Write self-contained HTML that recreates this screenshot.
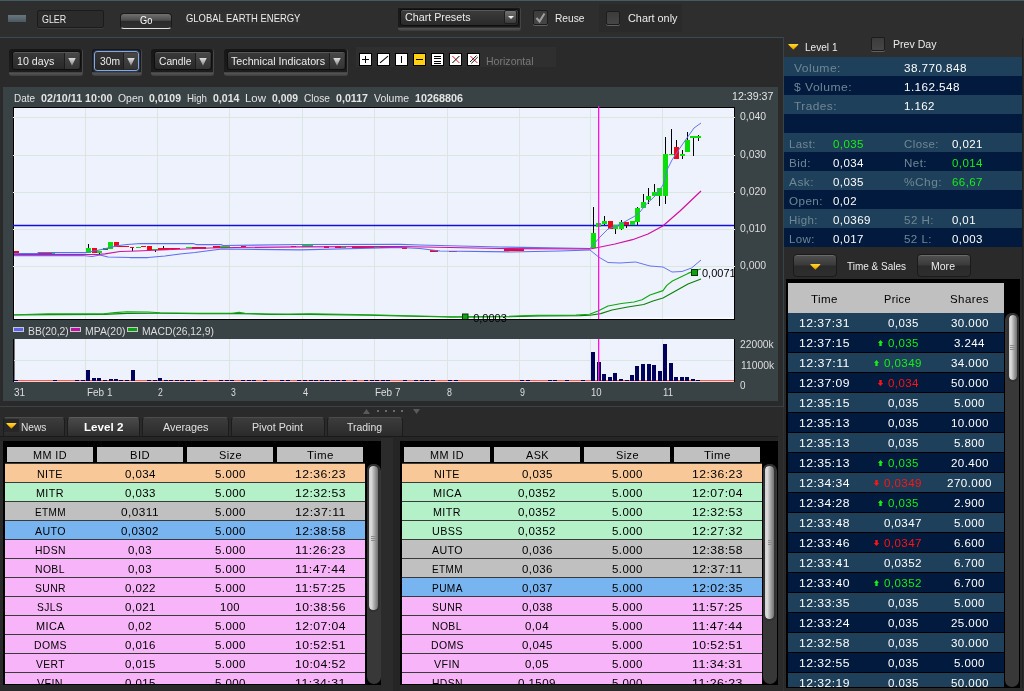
<!DOCTYPE html>
<html><head><meta charset="utf-8"><title>Chart</title>
<style>
*{box-sizing:border-box;margin:0;padding:0}
html,body{width:1024px;height:691px;overflow:hidden;background:#2a2a2a}
body{font-family:"Liberation Sans",sans-serif;font-size:11px;color:#e6e6e6;position:relative}
.abs{position:absolute}
.t{position:absolute;white-space:nowrap;line-height:1;transform-origin:0 0}
.ic{position:absolute;top:53px;width:13px;height:13px;background:#fff;border:1px solid #000}
.cb{position:absolute;background:linear-gradient(#3c3c3c,#464646);border:1px solid #1c1c1c;border-radius:2px;box-shadow:0 1px 0 #606060}
.tab{position:absolute;top:417px;height:19px;background:linear-gradient(#3c3c3c,#2b2b2b);border-left:1px solid #1c1c1c;border-right:1px solid #1c1c1c;border-top:1px solid #4c4c4c;border-radius:4px 4px 0 0}
.thumb{position:absolute;border-radius:6px;border:2px solid #323232;background:linear-gradient(90deg,#d0d0d0 0%,#dcdcdc 25%,#a0a0a0 65%,#707070 100%);background-clip:padding-box}
</style></head>
<body>
<div id="root" style="position:absolute;left:0;top:0;width:1024px;height:691px;will-change:transform">
<div class="abs" style="left:0px;top:0px;width:1024px;height:1px;background:#465a62"></div>
<div class="abs" style="left:0px;top:1px;width:1024px;height:36px;background:#2e2e2e"></div>
<div class="abs" style="left:0px;top:37px;width:783px;height:1px;background:#3a4a50"></div>
<div class="abs" style="left:8px;top:15px;width:18px;height:7px;background:linear-gradient(#6a767e,#4a5a62)"></div>
<div class="abs" style="left:37px;top:10px;width:67px;height:18px;background:#2b2b2b;border:1px solid #1b1b1b;border-radius:2px;box-shadow:0 1px 0 #3c3c3c"></div>
<div class="t" style="left:41.50px;top:14px;font-size:11px;color:#ececec;transform:scaleX(0.8073);">GLER</div>
<div class="abs" style="left:120px;top:13px;width:52px;height:16px;border-radius:4px;background:linear-gradient(#707070 0%,#4c4c4c 45%,#2a2a2a 52%,#303030 100%);border:1px solid #1a1a1a;border-bottom:1px solid #e0e0e0"></div>
<div class="t" style="left:139.70px;top:15px;font-size:11px;color:#fff;transform:scaleX(0.8376);">Go</div>
<div class="abs" style="left:186px;top:11px;width:115px;height:14px;background:#303030"></div>
<div class="t" style="left:186.00px;top:13px;font-size:11px;color:#ececec;transform:scaleX(0.8584);">GLOBAL EARTH ENERGY</div>
<div class="abs" style="left:398px;top:7px;width:123px;height:24px;background:linear-gradient(#3c3c3c 0%,#181818 6%,#1c1c1c 84%,#545454 88%,#3a3a3a 100%);border-radius:3px;border-right:1px solid #444"></div>
<div class="abs" style="left:400px;top:9px;width:119px;height:17px;background:linear-gradient(#3c3c3c,#2a2a2a);border:1px solid #0e0e0e;border-radius:3px;box-shadow:inset 0 1px 0 #585858"></div>
<div class="t" style="left:404.50px;top:12px;font-size:11px;color:#ececec;transform:scaleX(0.9738);">Chart Presets</div>
<div class="abs" style="left:504px;top:10px;width:13px;height:14px;background:linear-gradient(#727272,#3a3a3a);border:1px solid #1e1e1e;border-radius:2px"></div>
<div class="abs" style="left:507.5px;top:16px;width:0px;height:0px;border-left:3.2px solid transparent;border-right:3.2px solid transparent;border-top:3.6px solid #f0f0f0"></div>
<div class="cb" style="left:533px;top:10px;width:15px;height:15px;"></div>
<svg class="abs" style="left:533px;top:10px" width="15" height="15"><path d="M3.5 8 L6.5 11.5 L11.5 3.5" stroke="#a0a0a0" stroke-width="2" fill="none"/></svg>
<div class="t" style="left:554.50px;top:13px;font-size:11px;color:#ececec;transform:scaleX(0.9280);">Reuse</div>
<div class="abs" style="left:599px;top:4px;width:83px;height:28px;background:#2a2a2a"></div>
<div class="cb" style="left:606px;top:11px;width:14px;height:14px;"></div>
<div class="t" style="left:627.50px;top:13px;font-size:11px;color:#ececec;transform:scaleX(0.9868);">Chart only</div>
<div class="abs" style="left:9px;top:49px;width:74px;height:27px;background:linear-gradient(#161616 0%,#1d1d1d 85%,#585858 88%,#3e3e3e 100%);border-radius:3px;border-right:1px solid #484848"></div>
<div class="abs" style="left:12px;top:51px;width:69px;height:19px;background:linear-gradient(#3a3a3a,#292929);border:1px solid #0e0e0e;border-radius:3px;box-shadow:inset 0 1px 0 #585858"></div>
<div class="abs" style="left:64px;top:53px;width:15px;height:16px;background:linear-gradient(#484848,#343434);border-left:1px solid #1c1c1c;border-radius:0 2px 2px 0"></div>
<svg class="abs" style="left:68px;top:57.5px" width="8" height="8"><defs><linearGradient id="g9" x1="0" y1="0" x2="0" y2="1"><stop offset="0" stop-color="#e0e0e0"/><stop offset="1" stop-color="#808080"/></linearGradient></defs><path d="M0.3 0H7.7L4 7.8Z" fill="url(#g9)"/></svg>
<div class="t" style="left:17.00px;top:56px;font-size:11px;color:#ececec;transform:scaleX(0.9700);">10 days</div>
<div class="abs" style="left:92px;top:49px;width:50px;height:27px;background:linear-gradient(#161616 0%,#1d1d1d 85%,#585858 88%,#3e3e3e 100%);border-radius:3px;border-right:1px solid #484848"></div>
<div class="abs" style="left:94px;top:51px;width:45px;height:20px;background:linear-gradient(#343434,#272727);border:1px solid #86a8dc;border-radius:3px;box-shadow:0 0 0 1px #26364e"></div>
<div class="abs" style="left:123px;top:53px;width:15px;height:16px;background:linear-gradient(#484848,#343434);border-left:1px solid #1c1c1c;border-radius:0 2px 2px 0"></div>
<svg class="abs" style="left:127px;top:57.5px" width="8" height="8"><defs><linearGradient id="g92" x1="0" y1="0" x2="0" y2="1"><stop offset="0" stop-color="#e0e0e0"/><stop offset="1" stop-color="#808080"/></linearGradient></defs><path d="M0.3 0H7.7L4 7.8Z" fill="url(#g92)"/></svg>
<div class="t" style="left:99.50px;top:56px;font-size:11px;color:#ececec;transform:scaleX(0.9348);">30m</div>
<div class="abs" style="left:151px;top:49px;width:63px;height:27px;background:linear-gradient(#161616 0%,#1d1d1d 85%,#585858 88%,#3e3e3e 100%);border-radius:3px;border-right:1px solid #484848"></div>
<div class="abs" style="left:154px;top:51px;width:58px;height:19px;background:linear-gradient(#3a3a3a,#292929);border:1px solid #0e0e0e;border-radius:3px;box-shadow:inset 0 1px 0 #585858"></div>
<div class="abs" style="left:195px;top:53px;width:15px;height:16px;background:linear-gradient(#484848,#343434);border-left:1px solid #1c1c1c;border-radius:0 2px 2px 0"></div>
<svg class="abs" style="left:199px;top:57.5px" width="8" height="8"><defs><linearGradient id="g151" x1="0" y1="0" x2="0" y2="1"><stop offset="0" stop-color="#e0e0e0"/><stop offset="1" stop-color="#808080"/></linearGradient></defs><path d="M0.3 0H7.7L4 7.8Z" fill="url(#g151)"/></svg>
<div class="t" style="left:158.50px;top:56px;font-size:11px;color:#ececec;transform:scaleX(0.9320);">Candle</div>
<div class="abs" style="left:224px;top:49px;width:124px;height:27px;background:linear-gradient(#161616 0%,#1d1d1d 85%,#585858 88%,#3e3e3e 100%);border-radius:3px;border-right:1px solid #484848"></div>
<div class="abs" style="left:227px;top:51px;width:119px;height:19px;background:linear-gradient(#3a3a3a,#292929);border:1px solid #0e0e0e;border-radius:3px;box-shadow:inset 0 1px 0 #585858"></div>
<div class="abs" style="left:329px;top:53px;width:15px;height:16px;background:linear-gradient(#484848,#343434);border-left:1px solid #1c1c1c;border-radius:0 2px 2px 0"></div>
<svg class="abs" style="left:333px;top:57.5px" width="8" height="8"><defs><linearGradient id="g224" x1="0" y1="0" x2="0" y2="1"><stop offset="0" stop-color="#e0e0e0"/><stop offset="1" stop-color="#808080"/></linearGradient></defs><path d="M0.3 0H7.7L4 7.8Z" fill="url(#g224)"/></svg>
<div class="t" style="left:231.00px;top:56px;font-size:11px;color:#ececec;transform:scaleX(0.9733);">Technical Indicators</div>
<div class="abs" style="left:356px;top:47px;width:200px;height:20px;background:#2f2f2f"></div>
<div class="ic" style="left:359px;background:#fff"></div>
<div class="ic" style="left:377px;background:#fff"></div>
<div class="ic" style="left:395px;background:#fff"></div>
<div class="ic" style="left:413px;background:#ffd010"></div>
<div class="ic" style="left:431px;background:#fff"></div>
<div class="ic" style="left:449px;background:#fff"></div>
<div class="ic" style="left:467px;background:#fff"></div>
<svg class="abs" style="left:359px;top:53px" width="125" height="13"><path d="M3 6.5H10M6.5 3V10" stroke="#000" stroke-width="1" shape-rendering="crispEdges"/><path d="M21 9.8L29 3.2" stroke="#000" stroke-width="1.1"/><path d="M42.5 3V10" stroke="#000" stroke-width="1" shape-rendering="crispEdges"/><path d="M57 6.5H64" stroke="#000" stroke-width="1" shape-rendering="crispEdges"/><path d="M75 3.5H82M75 5.5H82M75 8.5H82M75 10.5H82" stroke="#000" stroke-width="1" shape-rendering="crispEdges"/><path d="M93.4 3L100.4 10" stroke="#f01010" stroke-width="1"/><path d="M93.4 10L100.4 3" stroke="#000" stroke-width="1"/><path d="M111.4 3L118.4 10" stroke="#f01010" stroke-width="1"/><path d="M111 9L117.5 2.6M112.3 10.4L118.8 4" stroke="#000" stroke-width="0.9"/></svg>
<div class="t" style="left:485.50px;top:56px;font-size:11px;color:#7a7a7a;transform:scaleX(0.9596);">Horizontal</div>
<div class="abs" style="left:3px;top:87px;width:775px;height:314px;background:#394245"></div>
<div class="t" style="left:13.50px;top:93px;font-size:11px;color:#e4e4e4;transform:scaleX(0.9048);">Date</div>
<div class="t" style="left:41.00px;top:93px;font-size:11px;color:#e4e4e4;transform:scaleX(0.9738);font-weight:bold;">02/10/11 10:00</div>
<div class="t" style="left:117.50px;top:93px;font-size:11px;color:#e4e4e4;transform:scaleX(0.9481);">Open</div>
<div class="t" style="left:149.00px;top:93px;font-size:11px;color:#e4e4e4;transform:scaleX(0.9507);font-weight:bold;">0,0109</div>
<div class="t" style="left:187.00px;top:93px;font-size:11px;color:#e4e4e4;transform:scaleX(0.8848);">High</div>
<div class="t" style="left:213.00px;top:93px;font-size:11px;color:#e4e4e4;transform:scaleX(0.9617);font-weight:bold;">0,014</div>
<div class="t" style="left:244.50px;top:93px;font-size:11px;color:#e4e4e4;transform:scaleX(1.0404);">Low</div>
<div class="t" style="left:272.00px;top:93px;font-size:11px;color:#e4e4e4;transform:scaleX(0.9436);font-weight:bold;">0,009</div>
<div class="t" style="left:304.00px;top:93px;font-size:11px;color:#e4e4e4;transform:scaleX(0.9251);">Close</div>
<div class="t" style="left:336.00px;top:93px;font-size:11px;color:#e4e4e4;transform:scaleX(0.9681);font-weight:bold;">0,0117</div>
<div class="t" style="left:374.00px;top:93px;font-size:11px;color:#e4e4e4;transform:scaleX(0.9541);">Volume</div>
<div class="t" style="left:414.50px;top:93px;font-size:11px;color:#e4e4e4;transform:scaleX(0.9806);font-weight:bold;">10268806</div>
<div class="t" style="left:732.30px;top:91px;font-size:11px;color:#e4e4e4;transform:scaleX(0.9674);">12:39:37</div>
<svg class="abs" style="left:0;top:87px" width="780" height="314" viewBox="0 87 780 314" font-family="Liberation Sans, sans-serif">
<rect x="13" y="107" width="722" height="213" fill="#000"/>
<rect x="14" y="108" width="720" height="211" fill="#eef2fc"/><rect x="14" y="317.5" width="720" height="1.5" fill="#fafbff"/><rect x="14" y="108" width="1" height="211" fill="#fafbff"/>
<rect x="13" y="339" width="722" height="43" fill="#eef2fc"/>
<rect x="13" y="339" width="1.5" height="43" fill="#000"/>
<rect x="734" y="339" width="1" height="43" fill="#000"/>
<path d="M85.5 108V319M85.5 339V381M157.5 108V319M157.5 339V381M229.5 108V319M229.5 339V381M302.5 108V319M302.5 339V381M374.5 108V319M374.5 339V381M447.5 108V319M447.5 339V381M519.5 108V319M519.5 339V381M590.5 108V319M590.5 339V381M662.5 108V319M662.5 339V381M14 117.5H734M14 155.5H734M14 192.5H734M14 229.5H734M14 266.5H734M14 360.5H734" stroke="#dbe6e1" stroke-width="1" fill="none" shape-rendering="crispEdges"/>
<path d="M13 117.5H14M734 117.5H735M13 155.5H14M734 155.5H735M13 192.5H14M734 192.5H735M13 229.5H14M734 229.5H735M13 266.5H14M734 266.5H735" stroke="#e8efec" stroke-width="1" shape-rendering="crispEdges"/>
<clipPath id="cp"><rect x="13" y="108" width="721" height="211"/></clipPath>
<g clip-path="url(#cp)">
<path d="M13 225.5H734" stroke="#1010e0" stroke-width="1.6"/>
<polyline points="14,315 48,314.6 104,314.4 127,313.4 160,313.2 200,313.8 240,313.6 270,314.4 310,314.4 370,315.2 400,316 450,317 510,316.8 540,315.9 580,315.6 590,315.2 600.7,313.6 612,310 627.8,307 643.7,304.5 653,301 663,298 675.5,291 688,284 701,279" fill="none" stroke="#0a800a" stroke-width="1.15" stroke-linejoin="round"/>
<polyline points="14,314.8 25,314.5 48,313.8 104,313.8 115,312.6 127,311.8 148,312 160,312.8 177,313 197,313.4 215,313.4 232,313.3 239,312.4 245,313.2 267,314 288,314.3 310,313.8 326,314 370,314.7 399,315.5 420,316 449,316.8 465,316.8 509,316.3 521,315.8 537,315.2 556,315.2 576,315 589.5,314.3 598,311 608,306 621.4,303.5 634,302 642,299.7 650,295 663,290.6 666.8,285.4 672.4,281 678.7,278 688,273.4 694,271 701,269" fill="none" stroke="#10a810" stroke-width="1.15" stroke-linejoin="round"/>
<g shape-rendering="crispEdges"><rect x="14" y="251" width="5" height="2" fill="#f00818"/><rect x="38" y="253" width="14" height="1" fill="#f00818"/><rect x="52" y="253" width="3" height="1" fill="#08e008"/><rect x="55" y="254" width="3" height="1" fill="#08e008"/><rect x="88" y="244" width="1" height="9" fill="#000"/><rect x="86" y="248" width="5" height="5" fill="#08e008"/><rect x="91.5" y="248" width="5" height="5" fill="#f00818"/><rect x="99" y="251" width="1" height="4" fill="#000"/><rect x="97" y="251" width="5" height="2" fill="#08e008"/><rect x="102.5" y="248" width="5" height="2" fill="#0a8a0a"/><rect x="108" y="242" width="5" height="6.5" fill="#08e008"/><rect x="113.5" y="242" width="5" height="5" fill="#f00818"/><rect x="119" y="246" width="10" height="1.2" fill="#f00818"/><rect x="131.5" y="246.5" width="1" height="4.5" fill="#000"/><rect x="130" y="246.5" width="4" height="1.5" fill="#f00818"/><rect x="136" y="246.5" width="5" height="1.2" fill="#08e008"/><rect x="141" y="246" width="5" height="1" fill="#f00818"/><rect x="147" y="246" width="5" height="4" fill="#f00818"/><rect x="154.5" y="249" width="1" height="3" fill="#000"/><rect x="152" y="249" width="6" height="1" fill="#08e008"/><rect x="162.5" y="246" width="1" height="3.5" fill="#000"/><rect x="157.5" y="247.5" width="11" height="2" fill="#f00818"/><rect x="169" y="247.5" width="11" height="1.5" fill="#f00818"/><rect x="186" y="247" width="6" height="1.2" fill="#08e008"/><rect x="192" y="247" width="14" height="1.5" fill="#f00818"/><rect x="213" y="246.3" width="7" height="1.3" fill="#f00818"/><rect x="220" y="246" width="10" height="1.5" fill="#08e008"/><rect x="241" y="245.5" width="5" height="1.5" fill="#f00818"/><rect x="291" y="245.5" width="5" height="1.5" fill="#f00818"/><rect x="302" y="244" width="6" height="2.5" fill="#08e008"/><rect x="308" y="245" width="5" height="1.5" fill="#08e008"/><rect x="324" y="246.3" width="5" height="1.3" fill="#f00818"/><rect x="335" y="246.3" width="6" height="1.3" fill="#f00818"/><rect x="341" y="246.5" width="5" height="1.3" fill="#08e008"/><rect x="352" y="246" width="22" height="1.8" fill="#f00818"/><rect x="374" y="246.3" width="6" height="1.3" fill="#08e008"/><rect x="380" y="246" width="22" height="1.8" fill="#f00818"/><rect x="402" y="247" width="5" height="1.6" fill="#f00818"/><rect x="430" y="250" width="8" height="1.8" fill="#f00818"/><rect x="449" y="250.5" width="8" height="1.6" fill="#f00818"/><rect x="504" y="248.5" width="20" height="2.2" fill="#f00818"/><rect x="524" y="247" width="8" height="1.4" fill="#f00818"/><rect x="592.5" y="207" width="1" height="41" fill="#000"/><rect x="590.5" y="233" width="5" height="15" fill="#08e008"/><rect x="596" y="223" width="5" height="3.5" fill="#08e008"/><rect x="604" y="216" width="1" height="9" fill="#000"/><rect x="602" y="221" width="5" height="3" fill="#08e008"/><rect x="607.5" y="221" width="5" height="8" fill="#f00818"/><rect x="615" y="225" width="1" height="9" fill="#000"/><rect x="613" y="225" width="5" height="4" fill="#08e008"/><rect x="620.5" y="220" width="1" height="10" fill="#000"/><rect x="618.5" y="222" width="5" height="7" fill="#08e008"/><rect x="626" y="222" width="1" height="6" fill="#000"/><rect x="624" y="222" width="5" height="3" fill="#f00818"/><rect x="629.5" y="220.5" width="5" height="4.5" fill="#08e008"/><rect x="637" y="207" width="1" height="18" fill="#000"/><rect x="635" y="208" width="5" height="14" fill="#08e008"/><rect x="642.5" y="194" width="1" height="13.5" fill="#000"/><rect x="640.5" y="201.5" width="5" height="6" fill="#08e008"/><rect x="648" y="188" width="1" height="16" fill="#000"/><rect x="646" y="195.5" width="5" height="4" fill="#08e008"/><rect x="653.5" y="184" width="1" height="11.5" fill="#000"/><rect x="651.5" y="192" width="5" height="3.5" fill="#08e008"/><rect x="659" y="188" width="1" height="18" fill="#000"/><rect x="657" y="188" width="5" height="7.5" fill="#08e008"/><rect x="665" y="137" width="1" height="67" fill="#000"/><rect x="663" y="154" width="5" height="41.5" fill="#08e008"/><rect x="670.5" y="129" width="1" height="26" fill="#000"/><rect x="668.5" y="153.5" width="5" height="1.5" fill="#08e008"/><rect x="676" y="140" width="1" height="19" fill="#000"/><rect x="674" y="147" width="5" height="12" fill="#f00818"/><rect x="681.5" y="150" width="1" height="9" fill="#000"/><rect x="679.5" y="154" width="5" height="2" fill="#08e008"/><rect x="687" y="132" width="1" height="20" fill="#000"/><rect x="685" y="140" width="5" height="12" fill="#08e008"/><rect x="692.5" y="137" width="1" height="19" fill="#000"/><rect x="690.5" y="136" width="5" height="2" fill="#08e008"/><rect x="690" y="136" width="11" height="1.5" fill="#08e008"/><rect x="698" y="135" width="1" height="6" fill="#000"/><rect x="696.5" y="136" width="4" height="1.5" fill="#08e008"/></g>
<polyline points="14,253.5 37.5,253.5 38.5,252.5 86,252.5 97,250.5 108,248 119,245.5 127,244.5 141,243.5 193,243.5 196,244.5 221,244.5 223,245.5 300,244.5 400,244.3 420,245 460,246 500,247 590,248.5" fill="none" stroke="#5c6ef2" stroke-width="1.25" stroke-linejoin="round"/>
<polyline points="14,255.5 83,255.5 92,256.5 100,255 108,257 130,257.5 148,257.5 165,256 180,254 195,252.5 210,250.5 222,249 300,249.8 400,247.5 420,248.5 440,251 510,252 560,251 590,250" fill="none" stroke="#5c6ef2" stroke-width="1.25" stroke-linejoin="round"/>
<polyline points="590,250 598.6,257 608,262.5 620,263 635.7,262 650,266 663,267 672,272 682,271.5 691.5,268 701,260" fill="none" stroke="#6474f2" stroke-width="1.0" stroke-linejoin="round"/>
<polyline points="590,248.5 600,237 608,229 617,226 634,216.6 640,212 645,205.5 655,196 663,185 667,170 672,160 682,145 694,128 701,123" fill="none" stroke="#6474f2" stroke-width="1.0" stroke-linejoin="round"/>
<polyline points="14,254.5 97,254.5 105,253.8 120,251.5 137,251 160,250 185,249 210,248 235,247.5 300,246.8 400,246.5 500,248.5 590,249 598,247.5 615,244 632.5,239.7 648,234 662.8,226 680,211 701,191" fill="none" stroke="#d010a0" stroke-width="1.2" stroke-linejoin="round"/>
<rect x="691.5" y="269.5" width="6" height="6" fill="#10a010" stroke="#043a04" stroke-width="1"/>
<text x="702" y="277" font-size="11" fill="#000">0,0071</text>
<rect x="462.5" y="314" width="5.5" height="6" fill="#10a010" stroke="#043a04" stroke-width="1"/>
</g>
<text x="469.5" y="321.6" font-size="11" fill="#000">-0,0003</text>
<rect x="14" y="380" width="720" height="1" fill="#ff5a50"/><rect x="14" y="381" width="720" height="1" fill="#f6d8dc"/>
<g shape-rendering="crispEdges"><rect x="86" y="370" width="4" height="11" fill="#00005c"/><rect x="92" y="378" width="4" height="3" fill="#00005c"/><rect x="97" y="378" width="4" height="3" fill="#00005c"/><rect x="109" y="379" width="4" height="2" fill="#00005c"/><rect x="114" y="379" width="4" height="2" fill="#00005c"/><rect x="131" y="370" width="4" height="11" fill="#00005c"/><rect x="158" y="378" width="4" height="3" fill="#00005c"/><rect x="14" y="379.6" width="4" height="1.4" fill="#00005c"/><rect x="53" y="379.6" width="4" height="1.4" fill="#00005c"/><rect x="75" y="379.6" width="4" height="1.4" fill="#00005c"/><rect x="81" y="379.6" width="4" height="1.4" fill="#00005c"/><rect x="103" y="379.6" width="4" height="1.4" fill="#00005c"/><rect x="119" y="379.6" width="4" height="1.4" fill="#00005c"/><rect x="125" y="379.6" width="4" height="1.4" fill="#00005c"/><rect x="147" y="379.6" width="4" height="1.4" fill="#00005c"/><rect x="153" y="379.6" width="4" height="1.4" fill="#00005c"/><rect x="164" y="379.6" width="4" height="1.4" fill="#00005c"/><rect x="169" y="379.6" width="4" height="1.4" fill="#00005c"/><rect x="175" y="379.6" width="4" height="1.4" fill="#00005c"/><rect x="180" y="379.6" width="4" height="1.4" fill="#00005c"/><rect x="186" y="379.6" width="4" height="1.4" fill="#00005c"/><rect x="191" y="379.6" width="4" height="1.4" fill="#00005c"/><rect x="203" y="379.6" width="4" height="1.4" fill="#00005c"/><rect x="219" y="379.6" width="4" height="1.4" fill="#00005c"/><rect x="225" y="379.6" width="4" height="1.4" fill="#00005c"/><rect x="230" y="379.6" width="4" height="1.4" fill="#00005c"/><rect x="241" y="379.6" width="4" height="1.4" fill="#00005c"/><rect x="247" y="379.6" width="4" height="1.4" fill="#00005c"/><rect x="252" y="379.6" width="4" height="1.4" fill="#00005c"/><rect x="263" y="379.6" width="4" height="1.4" fill="#00005c"/><rect x="280" y="379.6" width="4" height="1.4" fill="#00005c"/><rect x="286" y="379.6" width="4" height="1.4" fill="#00005c"/><rect x="297" y="379.6" width="4" height="1.4" fill="#00005c"/><rect x="303" y="379.6" width="4" height="1.4" fill="#00005c"/><rect x="309" y="379.6" width="4" height="1.4" fill="#00005c"/><rect x="314" y="379.6" width="4" height="1.4" fill="#00005c"/><rect x="320" y="379.6" width="4" height="1.4" fill="#00005c"/><rect x="325" y="379.6" width="4" height="1.4" fill="#00005c"/><rect x="331" y="379.6" width="4" height="1.4" fill="#00005c"/><rect x="336" y="379.6" width="4" height="1.4" fill="#00005c"/><rect x="342" y="379.6" width="4" height="1.4" fill="#00005c"/><rect x="353" y="379.6" width="4" height="1.4" fill="#00005c"/><rect x="364" y="379.6" width="4" height="1.4" fill="#00005c"/><rect x="370" y="379.6" width="4" height="1.4" fill="#00005c"/><rect x="375" y="379.6" width="4" height="1.4" fill="#00005c"/><rect x="381" y="379.6" width="4" height="1.4" fill="#00005c"/><rect x="386" y="379.6" width="4" height="1.4" fill="#00005c"/><rect x="403" y="379.6" width="4" height="1.4" fill="#00005c"/><rect x="414" y="379.6" width="4" height="1.4" fill="#00005c"/><rect x="420" y="379.6" width="4" height="1.4" fill="#00005c"/><rect x="425" y="379.6" width="4" height="1.4" fill="#00005c"/><rect x="431" y="379.6" width="4" height="1.4" fill="#00005c"/><rect x="448" y="379.6" width="4" height="1.4" fill="#00005c"/><rect x="454" y="379.6" width="4" height="1.4" fill="#00005c"/><rect x="520" y="379.6" width="4" height="1.4" fill="#00005c"/><rect x="526" y="379.6" width="4" height="1.4" fill="#00005c"/><rect x="548" y="379.6" width="4" height="1.4" fill="#00005c"/><rect x="553" y="379.6" width="4" height="1.4" fill="#00005c"/><rect x="565" y="379.6" width="4" height="1.4" fill="#00005c"/><rect x="581" y="379.6" width="4" height="1.4" fill="#00005c"/><rect x="591" y="352" width="4" height="29" fill="#00005c"/><rect x="597" y="362" width="4" height="19" fill="#00005c"/><rect x="602" y="374" width="4" height="7" fill="#00005c"/><rect x="608" y="377" width="4" height="4" fill="#00005c"/><rect x="613" y="372.7" width="4" height="8.3" fill="#00005c"/><rect x="619" y="379" width="4" height="2" fill="#00005c"/><rect x="624.5" y="380" width="4" height="1" fill="#00005c"/><rect x="630" y="375" width="4" height="6" fill="#00005c"/><rect x="635" y="366" width="4" height="15" fill="#00005c"/><rect x="641" y="364" width="4" height="17" fill="#00005c"/><rect x="647" y="364" width="4" height="17" fill="#00005c"/><rect x="652" y="365" width="4" height="16" fill="#00005c"/><rect x="658" y="371" width="4" height="10" fill="#00005c"/><rect x="663" y="344" width="4" height="37" fill="#00005c"/><rect x="669" y="363" width="4" height="18" fill="#00005c"/><rect x="674" y="377" width="4" height="4" fill="#00005c"/><rect x="680" y="377" width="4" height="4" fill="#00005c"/><rect x="685" y="377" width="4" height="4" fill="#00005c"/><rect x="691" y="379" width="4" height="2" fill="#00005c"/><rect x="696" y="380" width="4" height="1" fill="#00005c"/></g>
<rect x="598" y="106" width="1.3" height="213" fill="#ff10e0"/>
<rect x="598" y="339" width="1.3" height="42" fill="#ff10e0"/>
<rect x="13.5" y="327.5" width="10" height="4" fill="#5a64f0" stroke="#c8c8c8" stroke-width="1"/>
<rect x="70.5" y="327.5" width="10" height="4" fill="#c010a8" stroke="#c8c8c8" stroke-width="1"/>
<rect x="127.5" y="327.5" width="10" height="4" fill="#08a010" stroke="#c8c8c8" stroke-width="1"/>
</svg>
<div class="t" style="left:740.00px;top:111px;font-size:11px;color:#dedede;transform:scaleX(0.9508);">0,040</div>
<div class="t" style="left:740.00px;top:149px;font-size:11px;color:#dedede;transform:scaleX(0.9508);">0,030</div>
<div class="t" style="left:740.00px;top:186px;font-size:11px;color:#dedede;transform:scaleX(0.9508);">0,020</div>
<div class="t" style="left:740.00px;top:223px;font-size:11px;color:#dedede;transform:scaleX(0.9508);">0,010</div>
<div class="t" style="left:740.00px;top:260px;font-size:11px;color:#dedede;transform:scaleX(0.9508);">0,000</div>
<div class="t" style="left:740.00px;top:339px;font-size:11px;color:#dedede;transform:scaleX(0.9340);">22000k</div>
<div class="t" style="left:740.50px;top:360px;font-size:11px;color:#dedede;transform:scaleX(0.9417);">11000k</div>
<div class="t" style="left:740.00px;top:380px;font-size:11px;color:#dedede;transform:scaleX(0.9009);">0</div>
<div class="t" style="left:27.60px;top:326px;font-size:11px;color:#dedede;transform:scaleX(0.9402);">BB(20,2)</div>
<div class="t" style="left:84.90px;top:326px;font-size:11px;color:#dedede;transform:scaleX(0.9490);">MPA(20)</div>
<div class="t" style="left:141.50px;top:326px;font-size:11px;color:#dedede;transform:scaleX(0.9399);">MACD(26,12,9)</div>
<div class="t" style="left:13.70px;top:388px;font-size:10px;color:#dedede;transform:scaleX(0.9910);">31</div>
<div class="t" style="left:86.60px;top:388px;font-size:10px;color:#dedede;transform:scaleX(0.9941);">Feb 1</div>
<div class="t" style="left:158.20px;top:388px;font-size:10px;color:#dedede;transform:scaleX(0.8649);">2</div>
<div class="t" style="left:230.50px;top:388px;font-size:10px;color:#dedede;transform:scaleX(0.8649);">3</div>
<div class="t" style="left:302.80px;top:388px;font-size:10px;color:#dedede;transform:scaleX(0.9369);">4</div>
<div class="t" style="left:374.60px;top:388px;font-size:10px;color:#dedede;transform:scaleX(0.9941);">Feb 7</div>
<div class="t" style="left:447.30px;top:388px;font-size:10px;color:#dedede;transform:scaleX(0.8829);">8</div>
<div class="t" style="left:519.80px;top:388px;font-size:10px;color:#dedede;transform:scaleX(0.8829);">9</div>
<div class="t" style="left:590.90px;top:388px;font-size:10px;color:#dedede;transform:scaleX(0.9550);">10</div>
<div class="t" style="left:663.40px;top:388px;font-size:10px;color:#dedede;transform:scaleX(0.9615);">11</div>
<div class="abs" style="left:783px;top:37px;width:1px;height:370px;background:#36444a"></div>
<div class="abs" style="left:783px;top:407px;width:1px;height:284px;background:#313131"></div>
<div class="abs" style="left:784px;top:37px;width:240px;height:20px;background:#2e2e2e"></div>
<div class="abs" style="left:1022px;top:38px;width:1px;height:650px;background:#202020"></div>
<svg class="abs" style="left:788px;top:44px" width="11" height="6"><defs><linearGradient id="yg1" x1="0" y1="0" x2="0" y2="1"><stop offset="0" stop-color="#ffd638"/><stop offset="0.5" stop-color="#fcbc08"/><stop offset="1" stop-color="#d88c00"/></linearGradient></defs><path d="M0.2 0.4Q0.2 0 0.8 0H9.9Q10.5 0 10.5 0.4L5.35 5.7Z" fill="url(#yg1)"/></svg>
<div class="t" style="left:804.50px;top:42px;font-size:11px;color:#ececec;transform:scaleX(0.9161);">Level 1</div>
<div class="cb" style="left:871px;top:37px;width:14px;height:14px;"></div>
<div class="t" style="left:892.50px;top:39px;font-size:11px;color:#ececec;transform:scaleX(0.9622);">Prev Day</div>
<div class="abs" style="left:784px;top:57px;width:238px;height:19px;background:#1f405a"></div>
<div class="t" style="left:794.00px;top:63px;font-size:11px;color:#6f8794;transform:scaleX(1.1028);letter-spacing:0.4px;">Volume:</div>
<div class="t" style="left:904.00px;top:63px;font-size:11px;color:#fff;transform:scaleX(1.0656);letter-spacing:0.4px;">38.770.848</div>
<div class="abs" style="left:784px;top:76px;width:238px;height:19px;background:#021a3e"></div>
<div class="t" style="left:794.00px;top:82px;font-size:11px;color:#6f8794;transform:scaleX(1.1038);letter-spacing:0.4px;">$ Volume:</div>
<div class="t" style="left:904.00px;top:82px;font-size:11px;color:#fff;transform:scaleX(1.0642);letter-spacing:0.4px;">1.162.548</div>
<div class="abs" style="left:784px;top:95px;width:238px;height:19px;background:#1f405a"></div>
<div class="t" style="left:794.00px;top:101px;font-size:11px;color:#6f8794;transform:scaleX(1.0813);letter-spacing:0.4px;">Trades:</div>
<div class="t" style="left:904.00px;top:101px;font-size:11px;color:#fff;transform:scaleX(1.0461);letter-spacing:0.4px;">1.162</div>
<div class="abs" style="left:784px;top:114px;width:238px;height:19px;background:#021a3e"></div>
<div class="abs" style="left:784px;top:133px;width:238px;height:19px;background:#1f405a"></div>
<div class="t" style="left:789.00px;top:139px;font-size:11px;color:#6f8794;transform:scaleX(1.0404);letter-spacing:0.4px;">Last:</div>
<div class="t" style="left:832.50px;top:139px;font-size:11px;color:#14f014;transform:scaleX(1.0461);letter-spacing:0.4px;">0,035</div>
<div class="t" style="left:904.00px;top:139px;font-size:11px;color:#6f8794;transform:scaleX(1.0396);letter-spacing:0.4px;">Close:</div>
<div class="t" style="left:952.00px;top:139px;font-size:11px;color:#fff;transform:scaleX(1.0461);letter-spacing:0.4px;">0,021</div>
<div class="abs" style="left:784px;top:152px;width:238px;height:19px;background:#021a3e"></div>
<div class="t" style="left:789.00px;top:158px;font-size:11px;color:#6f8794;transform:scaleX(1.0657);letter-spacing:0.4px;">Bid:</div>
<div class="t" style="left:832.50px;top:158px;font-size:11px;color:#fff;transform:scaleX(1.0461);letter-spacing:0.4px;">0,034</div>
<div class="t" style="left:904.00px;top:158px;font-size:11px;color:#6f8794;transform:scaleX(1.0521);letter-spacing:0.4px;">Net:</div>
<div class="t" style="left:952.00px;top:158px;font-size:11px;color:#14f014;transform:scaleX(1.0461);letter-spacing:0.4px;">0,014</div>
<div class="abs" style="left:784px;top:171px;width:238px;height:19px;background:#1f405a"></div>
<div class="t" style="left:789.00px;top:177px;font-size:11px;color:#6f8794;transform:scaleX(1.0843);letter-spacing:0.4px;">Ask:</div>
<div class="t" style="left:832.50px;top:177px;font-size:11px;color:#fff;transform:scaleX(1.0461);letter-spacing:0.4px;">0,035</div>
<div class="t" style="left:904.00px;top:177px;font-size:11px;color:#6f8794;transform:scaleX(1.0838);letter-spacing:0.4px;">%Chg:</div>
<div class="t" style="left:952.00px;top:177px;font-size:11px;color:#14f014;transform:scaleX(1.0461);letter-spacing:0.4px;">66,67</div>
<div class="abs" style="left:784px;top:190px;width:238px;height:19px;background:#021a3e"></div>
<div class="t" style="left:789.00px;top:196px;font-size:11px;color:#6f8794;transform:scaleX(1.0610);letter-spacing:0.4px;">Open:</div>
<div class="t" style="left:832.50px;top:196px;font-size:11px;color:#fff;transform:scaleX(1.0401);letter-spacing:0.4px;">0,02</div>
<div class="abs" style="left:784px;top:209px;width:238px;height:19px;background:#1f405a"></div>
<div class="t" style="left:789.00px;top:215px;font-size:11px;color:#6f8794;transform:scaleX(1.0445);letter-spacing:0.4px;">High:</div>
<div class="t" style="left:832.50px;top:215px;font-size:11px;color:#fff;transform:scaleX(1.0516);letter-spacing:0.4px;">0,0369</div>
<div class="t" style="left:904.00px;top:215px;font-size:11px;color:#6f8794;transform:scaleX(1.0577);letter-spacing:0.4px;">52 H:</div>
<div class="t" style="left:952.00px;top:215px;font-size:11px;color:#fff;transform:scaleX(1.0401);letter-spacing:0.4px;">0,01</div>
<div class="abs" style="left:784px;top:228px;width:238px;height:19px;background:#021a3e"></div>
<div class="t" style="left:789.00px;top:234px;font-size:11px;color:#6f8794;transform:scaleX(1.0447);letter-spacing:0.4px;">Low:</div>
<div class="t" style="left:832.50px;top:234px;font-size:11px;color:#fff;transform:scaleX(1.0461);letter-spacing:0.4px;">0,017</div>
<div class="t" style="left:904.00px;top:234px;font-size:11px;color:#6f8794;transform:scaleX(1.0547);letter-spacing:0.4px;">52 L:</div>
<div class="t" style="left:952.00px;top:234px;font-size:11px;color:#fff;transform:scaleX(1.0461);letter-spacing:0.4px;">0,003</div>
<div class="abs" style="left:793px;top:254px;width:44px;height:23px;background:linear-gradient(#505050 0%,#3a3a3a 48%,#2a2a2a 52%,#2e2e2e 100%);border:1px solid #1a1a1a;border-radius:4px;box-shadow:inset 0 1px 0 #6a6a6a"></div>
<svg class="abs" style="left:810px;top:263.5px" width="11" height="6"><defs><linearGradient id="yg2" x1="0" y1="0" x2="0" y2="1"><stop offset="0" stop-color="#ffd638"/><stop offset="0.5" stop-color="#fcbc08"/><stop offset="1" stop-color="#d88c00"/></linearGradient></defs><path d="M0.2 0.4Q0.2 0 0.8 0H9.9Q10.5 0 10.5 0.4L5.35 5.7Z" fill="url(#yg2)"/></svg>
<div class="t" style="left:847.00px;top:261px;font-size:11px;color:#ececec;transform:scaleX(0.9076);">Time &amp; Sales</div>
<div class="abs" style="left:917px;top:254px;width:54px;height:23px;background:linear-gradient(#505050 0%,#3a3a3a 48%,#2a2a2a 52%,#2e2e2e 100%);border:1px solid #1a1a1a;border-radius:4px;box-shadow:inset 0 1px 0 #6a6a6a"></div>
<div class="t" style="left:931.00px;top:261px;font-size:11px;color:#ececec;transform:scaleX(0.9569);">More</div>
<div class="abs" style="left:786px;top:279px;width:234px;height:409px;background:#000"></div>
<div class="abs" style="left:788px;top:283px;width:216px;height:30px;background:#c0c0c0"></div>
<div class="t" style="left:810.75px;top:294px;font-size:11px;color:#000;transform:scaleX(1.0501);letter-spacing:0.4px;">Time</div>
<div class="t" style="left:883.75px;top:294px;font-size:11px;color:#000;transform:scaleX(0.9933);letter-spacing:0.4px;">Price</div>
<div class="t" style="left:950.25px;top:294px;font-size:11px;color:#000;transform:scaleX(1.0442);letter-spacing:0.4px;">Shares</div>
<div class="abs" style="left:788px;top:313px;width:216px;height:374px;overflow:hidden">
<div class="abs" style="left:0px;top:0px;width:216px;height:19px;background:#1f405a"></div>
<div class="t" style="left:10.75px;top:5px;font-size:11px;color:#fff;transform:scaleX(1.1064);letter-spacing:0.4px;">12:37:31</div>
<div class="t" style="left:99.75px;top:5px;font-size:11px;color:#fff;transform:scaleX(1.0461);letter-spacing:0.4px;">0,035</div>
<div class="t" style="left:162.75px;top:5px;font-size:11px;color:#fff;transform:scaleX(1.0516);letter-spacing:0.4px;">30.000</div>
<div class="abs" style="left:0px;top:20px;width:216px;height:19px;background:#021a3e"></div>
<div class="t" style="left:10.75px;top:25px;font-size:11px;color:#fff;transform:scaleX(1.1064);letter-spacing:0.4px;">12:37:15</div>
<div class="t" style="left:99.75px;top:25px;font-size:11px;color:#14f014;transform:scaleX(1.0461);letter-spacing:0.4px;">0,035</div>
<div class="t" style="left:166.25px;top:25px;font-size:11px;color:#fff;transform:scaleX(1.0461);letter-spacing:0.4px;">3.244</div>
<svg class="abs" style="left:89.75px;top:27px" width="5" height="6"><path d="M2.5 0L5 3H3.7V6H1.3V3H0Z" fill="#14f014"/></svg>
<div class="abs" style="left:0px;top:40px;width:216px;height:19px;background:#1f405a"></div>
<div class="t" style="left:10.75px;top:45px;font-size:11px;color:#fff;transform:scaleX(1.1267);letter-spacing:0.4px;">12:37:11</div>
<div class="t" style="left:96.25px;top:45px;font-size:11px;color:#14f014;transform:scaleX(1.0516);letter-spacing:0.4px;">0,0349</div>
<div class="t" style="left:162.75px;top:45px;font-size:11px;color:#fff;transform:scaleX(1.0516);letter-spacing:0.4px;">34.000</div>
<svg class="abs" style="left:86.25px;top:47px" width="5" height="6"><path d="M2.5 0L5 3H3.7V6H1.3V3H0Z" fill="#14f014"/></svg>
<div class="abs" style="left:0px;top:60px;width:216px;height:19px;background:#021a3e"></div>
<div class="t" style="left:10.75px;top:65px;font-size:11px;color:#fff;transform:scaleX(1.1064);letter-spacing:0.4px;">12:37:09</div>
<div class="t" style="left:99.75px;top:65px;font-size:11px;color:#ff1414;transform:scaleX(1.0461);letter-spacing:0.4px;">0,034</div>
<div class="t" style="left:162.75px;top:65px;font-size:11px;color:#fff;transform:scaleX(1.0516);letter-spacing:0.4px;">50.000</div>
<svg class="abs" style="left:89.75px;top:67px" width="5" height="6"><path d="M2.5 6L5.3 3H3.7V0H1.3V3H-0.3Z" fill="#ff1414"/></svg>
<div class="abs" style="left:0px;top:80px;width:216px;height:19px;background:#1f405a"></div>
<div class="t" style="left:10.75px;top:85px;font-size:11px;color:#fff;transform:scaleX(1.1064);letter-spacing:0.4px;">12:35:15</div>
<div class="t" style="left:99.75px;top:85px;font-size:11px;color:#fff;transform:scaleX(1.0461);letter-spacing:0.4px;">0,035</div>
<div class="t" style="left:166.25px;top:85px;font-size:11px;color:#fff;transform:scaleX(1.0461);letter-spacing:0.4px;">5.000</div>
<div class="abs" style="left:0px;top:100px;width:216px;height:19px;background:#021a3e"></div>
<div class="t" style="left:10.75px;top:105px;font-size:11px;color:#fff;transform:scaleX(1.1064);letter-spacing:0.4px;">12:35:13</div>
<div class="t" style="left:99.75px;top:105px;font-size:11px;color:#fff;transform:scaleX(1.0461);letter-spacing:0.4px;">0,035</div>
<div class="t" style="left:162.75px;top:105px;font-size:11px;color:#fff;transform:scaleX(1.0516);letter-spacing:0.4px;">10.000</div>
<div class="abs" style="left:0px;top:120px;width:216px;height:19px;background:#1f405a"></div>
<div class="t" style="left:10.75px;top:125px;font-size:11px;color:#fff;transform:scaleX(1.1064);letter-spacing:0.4px;">12:35:13</div>
<div class="t" style="left:99.75px;top:125px;font-size:11px;color:#fff;transform:scaleX(1.0461);letter-spacing:0.4px;">0,035</div>
<div class="t" style="left:166.25px;top:125px;font-size:11px;color:#fff;transform:scaleX(1.0461);letter-spacing:0.4px;">5.800</div>
<div class="abs" style="left:0px;top:140px;width:216px;height:19px;background:#021a3e"></div>
<div class="t" style="left:10.75px;top:145px;font-size:11px;color:#fff;transform:scaleX(1.1064);letter-spacing:0.4px;">12:35:13</div>
<div class="t" style="left:99.75px;top:145px;font-size:11px;color:#14f014;transform:scaleX(1.0461);letter-spacing:0.4px;">0,035</div>
<div class="t" style="left:162.75px;top:145px;font-size:11px;color:#fff;transform:scaleX(1.0516);letter-spacing:0.4px;">20.400</div>
<svg class="abs" style="left:89.75px;top:147px" width="5" height="6"><path d="M2.5 0L5 3H3.7V6H1.3V3H0Z" fill="#14f014"/></svg>
<div class="abs" style="left:0px;top:160px;width:216px;height:19px;background:#1f405a"></div>
<div class="t" style="left:10.75px;top:165px;font-size:11px;color:#fff;transform:scaleX(1.1064);letter-spacing:0.4px;">12:34:34</div>
<div class="t" style="left:96.25px;top:165px;font-size:11px;color:#ff1414;transform:scaleX(1.0516);letter-spacing:0.4px;">0,0349</div>
<div class="t" style="left:159.25px;top:165px;font-size:11px;color:#fff;transform:scaleX(1.0554);letter-spacing:0.4px;">270.000</div>
<svg class="abs" style="left:86.25px;top:167px" width="5" height="6"><path d="M2.5 6L5.3 3H3.7V0H1.3V3H-0.3Z" fill="#ff1414"/></svg>
<div class="abs" style="left:0px;top:180px;width:216px;height:19px;background:#021a3e"></div>
<div class="t" style="left:10.75px;top:185px;font-size:11px;color:#fff;transform:scaleX(1.1064);letter-spacing:0.4px;">12:34:28</div>
<div class="t" style="left:99.75px;top:185px;font-size:11px;color:#14f014;transform:scaleX(1.0461);letter-spacing:0.4px;">0,035</div>
<div class="t" style="left:166.25px;top:185px;font-size:11px;color:#fff;transform:scaleX(1.0461);letter-spacing:0.4px;">2.900</div>
<svg class="abs" style="left:89.75px;top:187px" width="5" height="6"><path d="M2.5 0L5 3H3.7V6H1.3V3H0Z" fill="#14f014"/></svg>
<div class="abs" style="left:0px;top:200px;width:216px;height:19px;background:#1f405a"></div>
<div class="t" style="left:10.75px;top:205px;font-size:11px;color:#fff;transform:scaleX(1.1064);letter-spacing:0.4px;">12:33:48</div>
<div class="t" style="left:96.25px;top:205px;font-size:11px;color:#fff;transform:scaleX(1.0516);letter-spacing:0.4px;">0,0347</div>
<div class="t" style="left:166.25px;top:205px;font-size:11px;color:#fff;transform:scaleX(1.0461);letter-spacing:0.4px;">5.000</div>
<div class="abs" style="left:0px;top:220px;width:216px;height:19px;background:#021a3e"></div>
<div class="t" style="left:10.75px;top:225px;font-size:11px;color:#fff;transform:scaleX(1.1064);letter-spacing:0.4px;">12:33:46</div>
<div class="t" style="left:96.25px;top:225px;font-size:11px;color:#ff1414;transform:scaleX(1.0516);letter-spacing:0.4px;">0,0347</div>
<div class="t" style="left:166.25px;top:225px;font-size:11px;color:#fff;transform:scaleX(1.0461);letter-spacing:0.4px;">6.600</div>
<svg class="abs" style="left:86.25px;top:227px" width="5" height="6"><path d="M2.5 6L5.3 3H3.7V0H1.3V3H-0.3Z" fill="#ff1414"/></svg>
<div class="abs" style="left:0px;top:240px;width:216px;height:19px;background:#1f405a"></div>
<div class="t" style="left:10.75px;top:245px;font-size:11px;color:#fff;transform:scaleX(1.1064);letter-spacing:0.4px;">12:33:41</div>
<div class="t" style="left:96.25px;top:245px;font-size:11px;color:#fff;transform:scaleX(1.0516);letter-spacing:0.4px;">0,0352</div>
<div class="t" style="left:166.25px;top:245px;font-size:11px;color:#fff;transform:scaleX(1.0461);letter-spacing:0.4px;">6.700</div>
<div class="abs" style="left:0px;top:260px;width:216px;height:19px;background:#021a3e"></div>
<div class="t" style="left:10.75px;top:265px;font-size:11px;color:#fff;transform:scaleX(1.1064);letter-spacing:0.4px;">12:33:40</div>
<div class="t" style="left:96.25px;top:265px;font-size:11px;color:#14f014;transform:scaleX(1.0516);letter-spacing:0.4px;">0,0352</div>
<div class="t" style="left:166.25px;top:265px;font-size:11px;color:#fff;transform:scaleX(1.0461);letter-spacing:0.4px;">6.700</div>
<svg class="abs" style="left:86.25px;top:267px" width="5" height="6"><path d="M2.5 0L5 3H3.7V6H1.3V3H0Z" fill="#14f014"/></svg>
<div class="abs" style="left:0px;top:280px;width:216px;height:19px;background:#1f405a"></div>
<div class="t" style="left:10.75px;top:285px;font-size:11px;color:#fff;transform:scaleX(1.1064);letter-spacing:0.4px;">12:33:35</div>
<div class="t" style="left:99.75px;top:285px;font-size:11px;color:#fff;transform:scaleX(1.0461);letter-spacing:0.4px;">0,035</div>
<div class="t" style="left:166.25px;top:285px;font-size:11px;color:#fff;transform:scaleX(1.0461);letter-spacing:0.4px;">5.000</div>
<div class="abs" style="left:0px;top:300px;width:216px;height:19px;background:#021a3e"></div>
<div class="t" style="left:10.75px;top:305px;font-size:11px;color:#fff;transform:scaleX(1.1064);letter-spacing:0.4px;">12:33:24</div>
<div class="t" style="left:99.75px;top:305px;font-size:11px;color:#fff;transform:scaleX(1.0461);letter-spacing:0.4px;">0,035</div>
<div class="t" style="left:162.75px;top:305px;font-size:11px;color:#fff;transform:scaleX(1.0516);letter-spacing:0.4px;">25.000</div>
<div class="abs" style="left:0px;top:320px;width:216px;height:19px;background:#1f405a"></div>
<div class="t" style="left:10.75px;top:325px;font-size:11px;color:#fff;transform:scaleX(1.1064);letter-spacing:0.4px;">12:32:58</div>
<div class="t" style="left:99.75px;top:325px;font-size:11px;color:#fff;transform:scaleX(1.0461);letter-spacing:0.4px;">0,035</div>
<div class="t" style="left:162.75px;top:325px;font-size:11px;color:#fff;transform:scaleX(1.0516);letter-spacing:0.4px;">30.000</div>
<div class="abs" style="left:0px;top:340px;width:216px;height:19px;background:#021a3e"></div>
<div class="t" style="left:10.75px;top:345px;font-size:11px;color:#fff;transform:scaleX(1.1064);letter-spacing:0.4px;">12:32:55</div>
<div class="t" style="left:99.75px;top:345px;font-size:11px;color:#fff;transform:scaleX(1.0461);letter-spacing:0.4px;">0,035</div>
<div class="t" style="left:166.25px;top:345px;font-size:11px;color:#fff;transform:scaleX(1.0461);letter-spacing:0.4px;">5.000</div>
<div class="abs" style="left:0px;top:360px;width:216px;height:19px;background:#1f405a"></div>
<div class="t" style="left:10.75px;top:365px;font-size:11px;color:#fff;transform:scaleX(1.1064);letter-spacing:0.4px;">12:32:19</div>
<div class="t" style="left:99.75px;top:365px;font-size:11px;color:#fff;transform:scaleX(1.0461);letter-spacing:0.4px;">0,035</div>
<div class="t" style="left:162.75px;top:365px;font-size:11px;color:#fff;transform:scaleX(1.0516);letter-spacing:0.4px;">50.000</div>
</div>
<div class="abs" style="left:1005px;top:313px;width:14px;height:374px;background:#383838;border-radius:7px"></div>
<div class="thumb" style="left:1006.5px;top:313px;width:12px;height:69px"></div>
<div class="abs" style="left:1010px;top:345px;width:5px;height:1px;background:#8c8c8c"></div>
<div class="abs" style="left:1010px;top:347px;width:5px;height:1px;background:#8c8c8c"></div>
<div class="abs" style="left:1010px;top:349px;width:5px;height:1px;background:#8c8c8c"></div>
<div class="abs" style="left:784px;top:688px;width:240px;height:3px;background:#2a2a2a"></div>
<div class="abs" style="left:0px;top:401px;width:778px;height:5px;background:#2a2a2a"></div>
<div class="abs" style="left:0px;top:406px;width:783px;height:1px;background:#36444a"></div>
<svg class="abs" style="left:362px;top:408px" width="60" height="7"><path d="M1 6L4.5 1L8 6Z" fill="#5a5a5a"/><path d="M51 1L54.5 6L58 1Z" fill="#5a5a5a"/><rect x="15" y="2" width="2" height="2" fill="#6a6a6a"/><rect x="23" y="2" width="2" height="2" fill="#6a6a6a"/><rect x="31" y="2" width="2" height="2" fill="#6a6a6a"/><rect x="39" y="2" width="2" height="2" fill="#6a6a6a"/></svg>
<div class="tab" style="left:3px;width:62px;"></div>
<div class="t" style="left:20.60px;top:422px;font-size:11px;color:#e0e0e0;transform:scaleX(0.9236);">News</div>
<div class="tab" style="left:67px;width:73px;background:linear-gradient(#4a4a4a,#2e2e2e);border-top-color:#5c5c5c;"></div>
<div class="t" style="left:83.60px;top:422px;font-size:11px;color:#fff;transform:scaleX(1.0566);font-weight:bold;">Level 2</div>
<div class="tab" style="left:142px;width:87px;"></div>
<div class="t" style="left:162.50px;top:422px;font-size:11px;color:#e0e0e0;transform:scaleX(0.9837);">Averages</div>
<div class="tab" style="left:231px;width:94px;"></div>
<div class="t" style="left:252.00px;top:422px;font-size:11px;color:#e0e0e0;transform:scaleX(0.9700);">Pivot Point</div>
<div class="tab" style="left:327px;width:76px;"></div>
<div class="t" style="left:347.00px;top:422px;font-size:11px;color:#e0e0e0;transform:scaleX(0.9484);">Trading</div>
<div class="abs" style="left:4px;top:419px;width:15px;height:13px;background:#262626"></div>
<svg class="abs" style="left:6px;top:423px" width="11" height="6"><defs><linearGradient id="yg3" x1="0" y1="0" x2="0" y2="1"><stop offset="0" stop-color="#ffd638"/><stop offset="0.5" stop-color="#fcbc08"/><stop offset="1" stop-color="#d88c00"/></linearGradient></defs><path d="M0.2 0.4Q0.2 0 0.8 0H9.9Q10.5 0 10.5 0.4L5.35 5.7Z" fill="url(#yg3)"/></svg>
<div class="abs" style="left:0px;top:436px;width:778px;height:1px;background:#1a1a1a"></div>
<div class="abs" style="left:0px;top:437px;width:778px;height:4px;background:#262626"></div>
<div class="abs" style="left:3px;top:441px;width:378px;height:244px;background:#000"></div>
<div class="abs" style="left:7px;top:447px;width:86px;height:15px;background:#c0c0c0"></div>
<div class="t" style="left:33.25px;top:450px;font-size:11px;color:#000;transform:scaleX(0.9854);letter-spacing:0.4px;">MM ID</div>
<div class="abs" style="left:97px;top:447px;width:86px;height:15px;background:#c0c0c0"></div>
<div class="t" style="left:130.25px;top:450px;font-size:11px;color:#000;transform:scaleX(1.0201);letter-spacing:0.4px;">BID</div>
<div class="abs" style="left:187px;top:447px;width:86px;height:15px;background:#c0c0c0"></div>
<div class="t" style="left:218.75px;top:450px;font-size:11px;color:#000;transform:scaleX(0.9958);letter-spacing:0.4px;">Size</div>
<div class="abs" style="left:277px;top:447px;width:86px;height:15px;background:#c0c0c0"></div>
<div class="t" style="left:306.75px;top:450px;font-size:11px;color:#000;transform:scaleX(1.0501);letter-spacing:0.4px;">Time</div>
<div class="abs" style="left:5px;top:463px;width:360px;height:221px;overflow:hidden;background:#3a3a3a">
<div class="abs" style="left:0px;top:1px;width:360px;height:18px;background:#f8c898"></div>
<div class="t" style="left:32.25px;top:6px;font-size:11px;color:#000;transform:scaleX(0.9703);letter-spacing:0.4px;">NITE</div>
<div class="t" style="left:119.75px;top:6px;font-size:11px;color:#000;transform:scaleX(1.0461);letter-spacing:0.4px;">0,034</div>
<div class="t" style="left:209.75px;top:6px;font-size:11px;color:#000;transform:scaleX(1.0461);letter-spacing:0.4px;">5.000</div>
<div class="t" style="left:289.75px;top:6px;font-size:11px;color:#000;transform:scaleX(1.1064);letter-spacing:0.4px;">12:36:23</div>
<div class="abs" style="left:0px;top:20px;width:360px;height:18px;background:#b4f0c8"></div>
<div class="t" style="left:31.25px;top:25px;font-size:11px;color:#000;transform:scaleX(0.9788);letter-spacing:0.4px;">MITR</div>
<div class="t" style="left:119.75px;top:25px;font-size:11px;color:#000;transform:scaleX(1.0461);letter-spacing:0.4px;">0,033</div>
<div class="t" style="left:209.75px;top:25px;font-size:11px;color:#000;transform:scaleX(1.0461);letter-spacing:0.4px;">5.000</div>
<div class="t" style="left:289.75px;top:25px;font-size:11px;color:#000;transform:scaleX(1.1064);letter-spacing:0.4px;">12:32:53</div>
<div class="abs" style="left:0px;top:39px;width:360px;height:18px;background:#c0c0c0"></div>
<div class="t" style="left:29.75px;top:44px;font-size:11px;color:#000;transform:scaleX(0.9079);letter-spacing:0.4px;">ETMM</div>
<div class="t" style="left:116.25px;top:44px;font-size:11px;color:#000;transform:scaleX(1.0765);letter-spacing:0.4px;">0,0311</div>
<div class="t" style="left:209.75px;top:44px;font-size:11px;color:#000;transform:scaleX(1.0461);letter-spacing:0.4px;">5.000</div>
<div class="t" style="left:289.75px;top:44px;font-size:11px;color:#000;transform:scaleX(1.1267);letter-spacing:0.4px;">12:37:11</div>
<div class="abs" style="left:0px;top:58px;width:360px;height:18px;background:#78b4f0"></div>
<div class="t" style="left:29.75px;top:63px;font-size:11px;color:#000;transform:scaleX(0.9664);letter-spacing:0.4px;">AUTO</div>
<div class="t" style="left:116.25px;top:63px;font-size:11px;color:#000;transform:scaleX(1.0516);letter-spacing:0.4px;">0,0302</div>
<div class="t" style="left:209.75px;top:63px;font-size:11px;color:#000;transform:scaleX(1.0461);letter-spacing:0.4px;">5.000</div>
<div class="t" style="left:289.75px;top:63px;font-size:11px;color:#000;transform:scaleX(1.1064);letter-spacing:0.4px;">12:38:58</div>
<div class="abs" style="left:0px;top:77px;width:360px;height:18px;background:#f8b4f8"></div>
<div class="t" style="left:29.75px;top:82px;font-size:11px;color:#000;transform:scaleX(0.9418);letter-spacing:0.4px;">HDSN</div>
<div class="t" style="left:123.25px;top:82px;font-size:11px;color:#000;transform:scaleX(1.0401);letter-spacing:0.4px;">0,03</div>
<div class="t" style="left:209.75px;top:82px;font-size:11px;color:#000;transform:scaleX(1.0461);letter-spacing:0.4px;">5.000</div>
<div class="t" style="left:289.75px;top:82px;font-size:11px;color:#000;transform:scaleX(1.1267);letter-spacing:0.4px;">11:26:23</div>
<div class="abs" style="left:0px;top:96px;width:360px;height:18px;background:#f8b4f8"></div>
<div class="t" style="left:30.25px;top:101px;font-size:11px;color:#000;transform:scaleX(0.9463);letter-spacing:0.4px;">NOBL</div>
<div class="t" style="left:123.25px;top:101px;font-size:11px;color:#000;transform:scaleX(1.0401);letter-spacing:0.4px;">0,03</div>
<div class="t" style="left:209.75px;top:101px;font-size:11px;color:#000;transform:scaleX(1.0461);letter-spacing:0.4px;">5.000</div>
<div class="t" style="left:289.75px;top:101px;font-size:11px;color:#000;transform:scaleX(1.1267);letter-spacing:0.4px;">11:47:44</div>
<div class="abs" style="left:0px;top:115px;width:360px;height:18px;background:#f8b4f8"></div>
<div class="t" style="left:29.75px;top:120px;font-size:11px;color:#000;transform:scaleX(0.9418);letter-spacing:0.4px;">SUNR</div>
<div class="t" style="left:119.75px;top:120px;font-size:11px;color:#000;transform:scaleX(1.0461);letter-spacing:0.4px;">0,022</div>
<div class="t" style="left:209.75px;top:120px;font-size:11px;color:#000;transform:scaleX(1.0461);letter-spacing:0.4px;">5.000</div>
<div class="t" style="left:289.75px;top:120px;font-size:11px;color:#000;transform:scaleX(1.1267);letter-spacing:0.4px;">11:57:25</div>
<div class="abs" style="left:0px;top:134px;width:360px;height:18px;background:#f8b4f8"></div>
<div class="t" style="left:32.25px;top:139px;font-size:11px;color:#000;transform:scaleX(0.9276);letter-spacing:0.4px;">SJLS</div>
<div class="t" style="left:119.75px;top:139px;font-size:11px;color:#000;transform:scaleX(1.0461);letter-spacing:0.4px;">0,021</div>
<div class="t" style="left:215.25px;top:139px;font-size:11px;color:#000;transform:scaleX(1.0172);letter-spacing:0.4px;">100</div>
<div class="t" style="left:289.75px;top:139px;font-size:11px;color:#000;transform:scaleX(1.1064);letter-spacing:0.4px;">10:38:56</div>
<div class="abs" style="left:0px;top:153px;width:360px;height:18px;background:#f8b4f8"></div>
<div class="t" style="left:30.75px;top:158px;font-size:11px;color:#000;transform:scaleX(0.9911);letter-spacing:0.4px;">MICA</div>
<div class="t" style="left:123.25px;top:158px;font-size:11px;color:#000;transform:scaleX(1.0401);letter-spacing:0.4px;">0,02</div>
<div class="t" style="left:209.75px;top:158px;font-size:11px;color:#000;transform:scaleX(1.0461);letter-spacing:0.4px;">5.000</div>
<div class="t" style="left:289.75px;top:158px;font-size:11px;color:#000;transform:scaleX(1.1064);letter-spacing:0.4px;">12:07:04</div>
<div class="abs" style="left:0px;top:172px;width:360px;height:18px;background:#f8b4f8"></div>
<div class="t" style="left:28.75px;top:177px;font-size:11px;color:#000;transform:scaleX(0.9503);letter-spacing:0.4px;">DOMS</div>
<div class="t" style="left:119.75px;top:177px;font-size:11px;color:#000;transform:scaleX(1.0461);letter-spacing:0.4px;">0,016</div>
<div class="t" style="left:209.75px;top:177px;font-size:11px;color:#000;transform:scaleX(1.0461);letter-spacing:0.4px;">5.000</div>
<div class="t" style="left:289.75px;top:177px;font-size:11px;color:#000;transform:scaleX(1.1064);letter-spacing:0.4px;">10:52:51</div>
<div class="abs" style="left:0px;top:191px;width:360px;height:18px;background:#f8b4f8"></div>
<div class="t" style="left:30.75px;top:196px;font-size:11px;color:#000;transform:scaleX(0.9390);letter-spacing:0.4px;">VERT</div>
<div class="t" style="left:119.75px;top:196px;font-size:11px;color:#000;transform:scaleX(1.0461);letter-spacing:0.4px;">0,015</div>
<div class="t" style="left:209.75px;top:196px;font-size:11px;color:#000;transform:scaleX(1.0461);letter-spacing:0.4px;">5.000</div>
<div class="t" style="left:289.75px;top:196px;font-size:11px;color:#000;transform:scaleX(1.1064);letter-spacing:0.4px;">10:04:52</div>
<div class="abs" style="left:0px;top:210px;width:360px;height:18px;background:#f8b4f8"></div>
<div class="t" style="left:32.25px;top:215px;font-size:11px;color:#000;transform:scaleX(0.9703);letter-spacing:0.4px;">VFIN</div>
<div class="t" style="left:119.75px;top:215px;font-size:11px;color:#000;transform:scaleX(1.0461);letter-spacing:0.4px;">0,015</div>
<div class="t" style="left:209.75px;top:215px;font-size:11px;color:#000;transform:scaleX(1.0461);letter-spacing:0.4px;">5.000</div>
<div class="t" style="left:289.75px;top:215px;font-size:11px;color:#000;transform:scaleX(1.1267);letter-spacing:0.4px;">11:34:31</div>
</div>
<div class="abs" style="left:366.5px;top:464px;width:14px;height:220px;background:#383838;border-radius:7px"></div>
<div class="thumb" style="left:367px;top:464px;width:13px;height:148px"></div>
<div class="abs" style="left:400px;top:441px;width:378px;height:244px;background:#000"></div>
<div class="abs" style="left:404px;top:447px;width:86px;height:15px;background:#c0c0c0"></div>
<div class="t" style="left:430.25px;top:450px;font-size:11px;color:#000;transform:scaleX(0.9854);letter-spacing:0.4px;">MM ID</div>
<div class="abs" style="left:494px;top:447px;width:86px;height:15px;background:#c0c0c0"></div>
<div class="t" style="left:525.75px;top:450px;font-size:11px;color:#000;transform:scaleX(0.9868);letter-spacing:0.4px;">ASK</div>
<div class="abs" style="left:584px;top:447px;width:86px;height:15px;background:#c0c0c0"></div>
<div class="t" style="left:615.75px;top:450px;font-size:11px;color:#000;transform:scaleX(0.9958);letter-spacing:0.4px;">Size</div>
<div class="abs" style="left:674px;top:447px;width:86px;height:15px;background:#c0c0c0"></div>
<div class="t" style="left:703.75px;top:450px;font-size:11px;color:#000;transform:scaleX(1.0501);letter-spacing:0.4px;">Time</div>
<div class="abs" style="left:402px;top:463px;width:360px;height:221px;overflow:hidden;background:#3a3a3a">
<div class="abs" style="left:0px;top:1px;width:360px;height:18px;background:#f8c898"></div>
<div class="t" style="left:32.25px;top:6px;font-size:11px;color:#000;transform:scaleX(0.9703);letter-spacing:0.4px;">NITE</div>
<div class="t" style="left:119.75px;top:6px;font-size:11px;color:#000;transform:scaleX(1.0461);letter-spacing:0.4px;">0,035</div>
<div class="t" style="left:209.75px;top:6px;font-size:11px;color:#000;transform:scaleX(1.0461);letter-spacing:0.4px;">5.000</div>
<div class="t" style="left:289.75px;top:6px;font-size:11px;color:#000;transform:scaleX(1.1064);letter-spacing:0.4px;">12:36:23</div>
<div class="abs" style="left:0px;top:20px;width:360px;height:18px;background:#b4f0c8"></div>
<div class="t" style="left:30.75px;top:25px;font-size:11px;color:#000;transform:scaleX(0.9911);letter-spacing:0.4px;">MICA</div>
<div class="t" style="left:116.25px;top:25px;font-size:11px;color:#000;transform:scaleX(1.0516);letter-spacing:0.4px;">0,0352</div>
<div class="t" style="left:209.75px;top:25px;font-size:11px;color:#000;transform:scaleX(1.0461);letter-spacing:0.4px;">5.000</div>
<div class="t" style="left:289.75px;top:25px;font-size:11px;color:#000;transform:scaleX(1.1064);letter-spacing:0.4px;">12:07:04</div>
<div class="abs" style="left:0px;top:39px;width:360px;height:18px;background:#b4f0c8"></div>
<div class="t" style="left:31.25px;top:44px;font-size:11px;color:#000;transform:scaleX(0.9788);letter-spacing:0.4px;">MITR</div>
<div class="t" style="left:116.25px;top:44px;font-size:11px;color:#000;transform:scaleX(1.0516);letter-spacing:0.4px;">0,0352</div>
<div class="t" style="left:209.75px;top:44px;font-size:11px;color:#000;transform:scaleX(1.0461);letter-spacing:0.4px;">5.000</div>
<div class="t" style="left:289.75px;top:44px;font-size:11px;color:#000;transform:scaleX(1.1064);letter-spacing:0.4px;">12:32:53</div>
<div class="abs" style="left:0px;top:58px;width:360px;height:18px;background:#b4f0c8"></div>
<div class="t" style="left:29.75px;top:63px;font-size:11px;color:#000;transform:scaleX(0.9783);letter-spacing:0.4px;">UBSS</div>
<div class="t" style="left:116.25px;top:63px;font-size:11px;color:#000;transform:scaleX(1.0516);letter-spacing:0.4px;">0,0352</div>
<div class="t" style="left:209.75px;top:63px;font-size:11px;color:#000;transform:scaleX(1.0461);letter-spacing:0.4px;">5.000</div>
<div class="t" style="left:289.75px;top:63px;font-size:11px;color:#000;transform:scaleX(1.1064);letter-spacing:0.4px;">12:27:32</div>
<div class="abs" style="left:0px;top:77px;width:360px;height:18px;background:#c0c0c0"></div>
<div class="t" style="left:29.75px;top:82px;font-size:11px;color:#000;transform:scaleX(0.9664);letter-spacing:0.4px;">AUTO</div>
<div class="t" style="left:119.75px;top:82px;font-size:11px;color:#000;transform:scaleX(1.0461);letter-spacing:0.4px;">0,036</div>
<div class="t" style="left:209.75px;top:82px;font-size:11px;color:#000;transform:scaleX(1.0461);letter-spacing:0.4px;">5.000</div>
<div class="t" style="left:289.75px;top:82px;font-size:11px;color:#000;transform:scaleX(1.1064);letter-spacing:0.4px;">12:38:58</div>
<div class="abs" style="left:0px;top:96px;width:360px;height:18px;background:#c0c0c0"></div>
<div class="t" style="left:29.75px;top:101px;font-size:11px;color:#000;transform:scaleX(0.9079);letter-spacing:0.4px;">ETMM</div>
<div class="t" style="left:119.75px;top:101px;font-size:11px;color:#000;transform:scaleX(1.0461);letter-spacing:0.4px;">0,036</div>
<div class="t" style="left:209.75px;top:101px;font-size:11px;color:#000;transform:scaleX(1.0461);letter-spacing:0.4px;">5.000</div>
<div class="t" style="left:289.75px;top:101px;font-size:11px;color:#000;transform:scaleX(1.1267);letter-spacing:0.4px;">12:37:11</div>
<div class="abs" style="left:0px;top:115px;width:360px;height:18px;background:#78b4f0"></div>
<div class="t" style="left:29.75px;top:120px;font-size:11px;color:#000;transform:scaleX(0.9245);letter-spacing:0.4px;">PUMA</div>
<div class="t" style="left:119.75px;top:120px;font-size:11px;color:#000;transform:scaleX(1.0461);letter-spacing:0.4px;">0,037</div>
<div class="t" style="left:209.75px;top:120px;font-size:11px;color:#000;transform:scaleX(1.0461);letter-spacing:0.4px;">5.000</div>
<div class="t" style="left:289.75px;top:120px;font-size:11px;color:#000;transform:scaleX(1.1064);letter-spacing:0.4px;">12:02:35</div>
<div class="abs" style="left:0px;top:134px;width:360px;height:18px;background:#f8b4f8"></div>
<div class="t" style="left:29.75px;top:139px;font-size:11px;color:#000;transform:scaleX(0.9418);letter-spacing:0.4px;">SUNR</div>
<div class="t" style="left:119.75px;top:139px;font-size:11px;color:#000;transform:scaleX(1.0461);letter-spacing:0.4px;">0,038</div>
<div class="t" style="left:209.75px;top:139px;font-size:11px;color:#000;transform:scaleX(1.0461);letter-spacing:0.4px;">5.000</div>
<div class="t" style="left:289.75px;top:139px;font-size:11px;color:#000;transform:scaleX(1.1267);letter-spacing:0.4px;">11:57:25</div>
<div class="abs" style="left:0px;top:153px;width:360px;height:18px;background:#f8b4f8"></div>
<div class="t" style="left:30.25px;top:158px;font-size:11px;color:#000;transform:scaleX(0.9463);letter-spacing:0.4px;">NOBL</div>
<div class="t" style="left:123.25px;top:158px;font-size:11px;color:#000;transform:scaleX(1.0401);letter-spacing:0.4px;">0,04</div>
<div class="t" style="left:209.75px;top:158px;font-size:11px;color:#000;transform:scaleX(1.0461);letter-spacing:0.4px;">5.000</div>
<div class="t" style="left:289.75px;top:158px;font-size:11px;color:#000;transform:scaleX(1.1267);letter-spacing:0.4px;">11:47:44</div>
<div class="abs" style="left:0px;top:172px;width:360px;height:18px;background:#f8b4f8"></div>
<div class="t" style="left:28.75px;top:177px;font-size:11px;color:#000;transform:scaleX(0.9503);letter-spacing:0.4px;">DOMS</div>
<div class="t" style="left:119.75px;top:177px;font-size:11px;color:#000;transform:scaleX(1.0461);letter-spacing:0.4px;">0,045</div>
<div class="t" style="left:209.75px;top:177px;font-size:11px;color:#000;transform:scaleX(1.0461);letter-spacing:0.4px;">5.000</div>
<div class="t" style="left:289.75px;top:177px;font-size:11px;color:#000;transform:scaleX(1.1064);letter-spacing:0.4px;">10:52:51</div>
<div class="abs" style="left:0px;top:191px;width:360px;height:18px;background:#f8b4f8"></div>
<div class="t" style="left:32.25px;top:196px;font-size:11px;color:#000;transform:scaleX(0.9703);letter-spacing:0.4px;">VFIN</div>
<div class="t" style="left:123.25px;top:196px;font-size:11px;color:#000;transform:scaleX(1.0401);letter-spacing:0.4px;">0,05</div>
<div class="t" style="left:209.75px;top:196px;font-size:11px;color:#000;transform:scaleX(1.0461);letter-spacing:0.4px;">5.000</div>
<div class="t" style="left:289.75px;top:196px;font-size:11px;color:#000;transform:scaleX(1.1267);letter-spacing:0.4px;">11:34:31</div>
<div class="abs" style="left:0px;top:210px;width:360px;height:18px;background:#f8b4f8"></div>
<div class="t" style="left:29.75px;top:215px;font-size:11px;color:#000;transform:scaleX(0.9418);letter-spacing:0.4px;">HDSN</div>
<div class="t" style="left:116.25px;top:215px;font-size:11px;color:#000;transform:scaleX(1.0516);letter-spacing:0.4px;">0,1509</div>
<div class="t" style="left:209.75px;top:215px;font-size:11px;color:#000;transform:scaleX(1.0461);letter-spacing:0.4px;">5.000</div>
<div class="t" style="left:289.75px;top:215px;font-size:11px;color:#000;transform:scaleX(1.1267);letter-spacing:0.4px;">11:26:23</div>
</div>
<div class="abs" style="left:762.5px;top:464px;width:14px;height:220px;background:#383838;border-radius:7px"></div>
<div class="thumb" style="left:763px;top:464px;width:13px;height:157px"></div>
<div class="abs" style="left:371px;top:536px;width:5px;height:1px;background:#8c8c8c"></div>
<div class="abs" style="left:371px;top:538px;width:5px;height:1px;background:#8c8c8c"></div>
<div class="abs" style="left:371px;top:540px;width:5px;height:1px;background:#8c8c8c"></div>
<div class="abs" style="left:768px;top:540px;width:5px;height:1px;background:#8c8c8c"></div>
<div class="abs" style="left:768px;top:542px;width:5px;height:1px;background:#8c8c8c"></div>
<div class="abs" style="left:768px;top:544px;width:5px;height:1px;background:#8c8c8c"></div>
<div class="abs" style="left:381px;top:438px;width:12px;height:253px;background:#2b2b2b"></div>
<div class="abs" style="left:393px;top:438px;width:7px;height:253px;background:#252525"></div>
</div>
</body></html>
